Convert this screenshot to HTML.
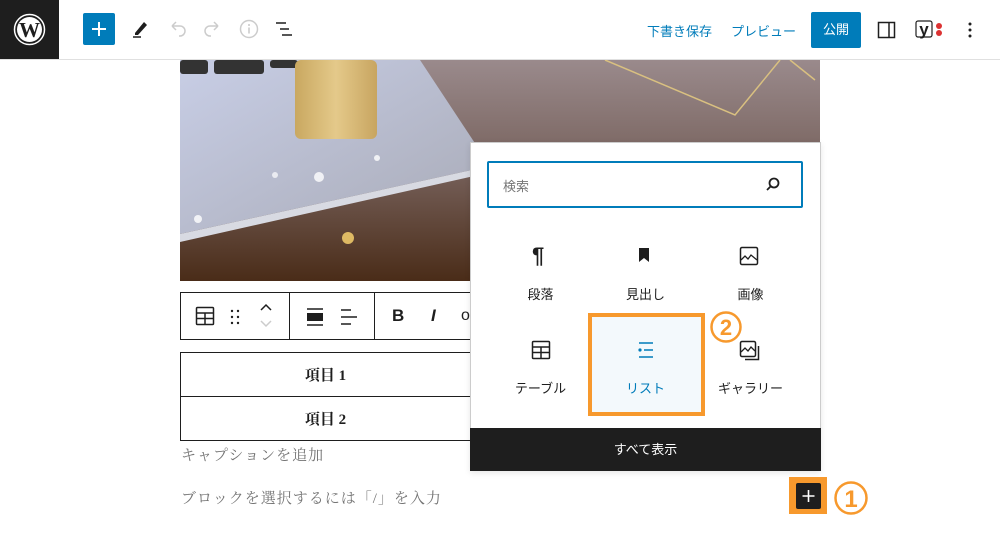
<!DOCTYPE html>
<html><head><meta charset="utf-8"><style>
*{box-sizing:border-box;margin:0;padding:0}
body{width:1000px;height:544px;overflow:hidden;background:#fff;font-family:"Liberation Sans","Noto Sans CJK JP",sans-serif;position:relative}
.abs{position:absolute}
.top{left:0;top:0;width:1000px;height:60px;border-bottom:1px solid #e0e0e0;background:#fff}
.serif{font-family:"Liberation Serif","Noto Serif CJK SC",serif}
.lbl{position:absolute;font-size:13px;color:#1e1e1e;text-align:center;width:105px}
</style></head><body>
<div class="abs top">
 <div class="abs" style="left:0;top:0;width:59px;height:59px;background:#1e1e1e">
  <svg class="abs" style="left:13px;top:13px" width="33" height="33" viewBox="0 0 33 33"><circle cx="16.5" cy="16.5" r="15" fill="none" stroke="#fff" stroke-width="1.5"/><circle cx="16.5" cy="16.5" r="12.5" fill="#fff"/><text x="16.5" y="24" text-anchor="middle" font-family="Liberation Serif" font-weight="bold" font-size="21" fill="#1e1e1e">W</text></svg>
 </div>
 <div class="abs" style="left:83px;top:13px;width:32px;height:32px;background:#007cba;border-radius:2px"><svg width="32" height="32"><path d="M16 9v14M9 16h14" stroke="#fff" stroke-width="2"/></svg></div>
 <svg class="abs" style="left:130px;top:18px" width="22" height="22"><path d="M5 15l9-11 3 3-9 10H5z" fill="#1e1e1e"/><path d="M3 19h8" stroke="#1e1e1e" stroke-width="1.5"/></svg>
 <svg class="abs" style="left:166px;top:18px" width="22" height="22"><path d="M6 8h8a5 5 0 0 1 0 10h-1M6 8l4-4M6 8l4 4" fill="none" stroke="#ccc" stroke-width="1.5"/></svg>
 <svg class="abs" style="left:202px;top:18px" width="22" height="22"><path d="M16 8H8a5 5 0 0 0 0 10h1M16 8l-4-4M16 8l-4 4" fill="none" stroke="#ccc" stroke-width="1.5"/></svg>
 <svg class="abs" style="left:238px;top:18px" width="22" height="22"><circle cx="11" cy="11" r="8.5" fill="none" stroke="#ccc" stroke-width="1.5"/><path d="M11 9.5v6M11 6v2" stroke="#ccc" stroke-width="1.6"/></svg>
 <svg class="abs" style="left:274px;top:20px" width="22" height="18"><path d="M2 3h10M6 9h9M8 15h10" stroke="#1e1e1e" stroke-width="1.6"/></svg>
 <div class="abs" style="left:647px;top:21px;font-size:13px;color:#007cba">下書き保存</div>
 <div class="abs" style="left:731px;top:21px;font-size:13px;color:#007cba">プレビュー</div>
 <div class="abs" style="left:811px;top:12px;width:50px;height:36px;background:#007cba;border-radius:2px;color:#fff;font-size:13px;text-align:center;line-height:36px">公開</div>
 <svg class="abs" style="left:877px;top:20px" width="20" height="20"><rect x="1.5" y="2.5" width="16" height="15" fill="none" stroke="#1e1e1e" stroke-width="1.5"/><path d="M12 3v14" stroke="#1e1e1e" stroke-width="1.5"/></svg>
 <svg class="abs" style="left:914px;top:18px" width="32" height="24"><rect x="2" y="3" width="16" height="16" rx="2" fill="none" stroke="#1e1e1e" stroke-width="1.2"/><text x="10" y="17" text-anchor="middle" font-size="17" font-weight="bold" fill="#1e1e1e" font-family="Liberation Sans">y</text><circle cx="25" cy="8" r="3" fill="#dc3232"/><circle cx="25" cy="15" r="3" fill="#dc3232"/></svg>
 <svg class="abs" style="left:965px;top:20px" width="10" height="20"><circle cx="5" cy="4" r="1.5" fill="#1e1e1e"/><circle cx="5" cy="10" r="1.5" fill="#1e1e1e"/><circle cx="5" cy="16" r="1.5" fill="#1e1e1e"/></svg>
</div>

<svg class="abs" style="left:180px;top:60px" width="640" height="221" viewBox="0 0 640 221">
 <defs>
  <linearGradient id="wood" x1="0" y1="0" x2="0" y2="1"><stop offset="0" stop-color="#9a8a8c"/><stop offset="0.45" stop-color="#7a6560"/><stop offset="1" stop-color="#4a2c18"/></linearGradient>
  <linearGradient id="lap" x1="0" y1="0" x2="1" y2="1"><stop offset="0" stop-color="#c8cee6"/><stop offset="1" stop-color="#a8aab6"/></linearGradient>
  <linearGradient id="gold" x1="0" y1="0" x2="1" y2="0"><stop offset="0" stop-color="#c9a860"/><stop offset="0.5" stop-color="#e4c98a"/><stop offset="1" stop-color="#c8a560"/></linearGradient>
 </defs>
 <rect width="640" height="221" fill="url(#wood)"/>
 <polygon points="0,0 240,0 310,106 0,174" fill="url(#lap)"/>
 <polygon points="0,174 310,106 312,112 0,182" fill="#d8dae2"/>
 <rect x="0" y="0" width="28" height="14" rx="3" fill="#333"/>
 <rect x="34" y="0" width="50" height="14" rx="3" fill="#333"/>
 <rect x="90" y="0" width="28" height="8" rx="3" fill="#333"/>
 <rect x="115" y="0" width="82" height="79" rx="6" fill="url(#gold)"/>
 <path d="M425 0L555 55 L600 0M610 0L635 20" stroke="#d9c080" stroke-width="1.5" fill="none"/>
 <circle cx="168" cy="178" r="6" fill="#ffd870" opacity=".8"/>
 <circle cx="139" cy="117" r="5" fill="#fff" opacity=".8"/>
 <circle cx="197" cy="98" r="3" fill="#fff" opacity=".8"/>
 <circle cx="18" cy="159" r="4" fill="#fff" opacity=".8"/>
 <circle cx="95" cy="115" r="3" fill="#fff" opacity=".7"/>
</svg>

<div class="abs" style="left:180px;top:292px;width:300px;height:48px;border:1px solid #1e1e1e;background:#fff">
 <svg class="abs" style="left:14px;top:13px" width="20" height="20"><rect x="1.5" y="1.5" width="17" height="17" rx="1" fill="none" stroke="#1e1e1e" stroke-width="1.5"/><path d="M1.5 7h17M1.5 12.5h17M10 7v11" stroke="#1e1e1e" stroke-width="1.5"/></svg>
 <svg class="abs" style="left:48px;top:15px" width="12" height="18"><g fill="#1e1e1e"><circle cx="3" cy="3" r="1.2"/><circle cx="9" cy="3" r="1.2"/><circle cx="3" cy="9" r="1.2"/><circle cx="9" cy="9" r="1.2"/><circle cx="3" cy="15" r="1.2"/><circle cx="9" cy="15" r="1.2"/></g></svg>
 <svg class="abs" style="left:77px;top:8px" width="16" height="30"><path d="M3 9l5-5 5 5" fill="none" stroke="#1e1e1e" stroke-width="1.5"/><path d="M3 20l5 5 5-5" fill="none" stroke="#ccc" stroke-width="1.5"/></svg>
 <div class="abs" style="left:108px;top:0;width:1px;height:46px;background:#1e1e1e"></div>
 <svg class="abs" style="left:124px;top:14px" width="20" height="20"><path d="M2 2h16M2 18h16" stroke="#1e1e1e" stroke-width="1.5"/><rect x="2" y="6" width="16" height="8" fill="#1e1e1e"/></svg>
 <svg class="abs" style="left:158px;top:14px" width="20" height="20"><path d="M2 3h10M2 10h16M2 17h10" stroke="#1e1e1e" stroke-width="1.5"/></svg>
 <div class="abs" style="left:193px;top:0;width:1px;height:46px;background:#1e1e1e"></div>
 <div class="abs" style="left:211px;top:13px;font-size:17px;font-weight:bold;color:#1e1e1e">B</div>
 <div class="abs" style="left:250px;top:13px;font-size:17px;font-style:italic;font-weight:bold;color:#1e1e1e">I</div>
 <div class="abs" style="left:280px;top:14px;font-size:16px;color:#1e1e1e">o</div>
</div>

<table class="abs serif" style="left:180px;top:352px;width:640px;border-collapse:collapse;font-size:15px;color:#1e1e1e">
 <tr><td style="border:1px solid #1e1e1e;height:44px;text-align:center;width:290px;font-weight:bold">項目 1</td><td style="border:1px solid #1e1e1e"></td></tr>
 <tr><td style="border:1px solid #1e1e1e;height:44px;text-align:center;font-weight:bold">項目 2</td><td style="border:1px solid #1e1e1e"></td></tr>
</table>
<div class="abs serif" style="left:181px;top:444px;font-size:15px;color:#757575;letter-spacing:1px">キャプションを追加</div>
<div class="abs serif" style="left:181px;top:487px;font-size:15px;color:#757575;letter-spacing:1px">ブロックを選択するには「/」を入力</div>

<div class="abs" style="left:470px;top:142px;width:351px;height:329px;background:#fff;border:1px solid #ccc;box-shadow:0 2px 6px rgba(0,0,0,.1)">
 <div class="abs" style="left:16px;top:18px;width:316px;height:47px;border:2px solid #007cba;border-radius:2px">
  <div class="abs" style="left:14px;top:13px;font-size:13px;color:#757575">検索</div>
  <svg class="abs" style="left:274px;top:12px" width="20" height="20"><circle cx="11" cy="8" r="4.5" fill="none" stroke="#1e1e1e" stroke-width="1.8"/><path d="M8 11l-4 4" stroke="#1e1e1e" stroke-width="1.8"/></svg>
 </div>
 <div class="abs" style="left:117px;top:170px;width:117px;height:103px;border:4px solid #f7992d;background:#f3f9fc"></div>
 <div class="abs" style="left:61px;top:100px;font-size:22px;font-weight:bold;color:#1e1e1e">¶</div>
 <svg class="abs" style="left:166px;top:104px" width="14" height="16"><path d="M2 1h10v14l-5-4-5 4z" fill="#1e1e1e"/></svg>
 <svg class="abs" style="left:268px;top:103px" width="20" height="20"><rect x="1.5" y="1.5" width="17" height="17" rx="1.5" fill="none" stroke="#1e1e1e" stroke-width="1.5"/><path d="M2 14l4-4 3 3 3-4 6 5" fill="none" stroke="#1e1e1e" stroke-width="1.3"/></svg>
 <div class="lbl" style="left:17px;top:141px">段落</div>
 <div class="lbl" style="left:122px;top:141px">見出し</div>
 <div class="lbl" style="left:227px;top:141px">画像</div>
 <svg class="abs" style="left:60px;top:197px" width="20" height="20"><rect x="1.5" y="1.5" width="17" height="17" rx="1" fill="none" stroke="#1e1e1e" stroke-width="1.5"/><path d="M1.5 7h17M1.5 12.5h17M10 7v11" stroke="#1e1e1e" stroke-width="1.5"/></svg>
 <svg class="abs" style="left:165px;top:198px" width="20" height="18"><path d="M3 2h14M8 9h9M3 16h14" stroke="#007cba" stroke-width="1.5"/><circle cx="4" cy="9" r="1.6" fill="#007cba"/></svg>
 <svg class="abs" style="left:268px;top:197px" width="22" height="22"><rect x="1.5" y="1.5" width="15" height="15" rx="1.5" fill="none" stroke="#1e1e1e" stroke-width="1.5"/><path d="M2 12l4-4 3 3 3-4 4 4" fill="none" stroke="#1e1e1e" stroke-width="1.3"/><path d="M19.5 6v13.5H6" fill="none" stroke="#1e1e1e" stroke-width="1.5"/></svg>
 <div class="lbl" style="left:17px;top:235px">テーブル</div>
 <div class="lbl" style="left:122px;top:235px;color:#007cba">リスト</div>
 <div class="lbl" style="left:227px;top:235px">ギャラリー</div>
 <div class="abs" style="left:-1px;top:285px;width:351px;height:43px;background:#1e1e1e;color:#fff;font-size:13px;text-align:center;line-height:43px">すべて表示</div>
</div>
<svg class="abs" style="left:708px;top:310px" width="36" height="36"><circle cx="18" cy="17" r="14.5" fill="none" stroke="#f7992d" stroke-width="2.5"/><text x="18" y="25" text-anchor="middle" font-family="Liberation Sans" font-weight="bold" font-size="22" fill="#f7992d">2</text></svg>

<div class="abs" style="left:789px;top:477px;width:38px;height:37px;background:#f7992d"></div>
<div class="abs" style="left:796px;top:483px;width:25px;height:26px;background:#1e1e1e;border-radius:2px"><svg width="25" height="26"><path d="M12.5 7v12M6.5 13h12" stroke="#fff" stroke-width="1.6"/></svg></div>
<svg class="abs" style="left:833px;top:480px" width="38" height="38"><circle cx="18" cy="18" r="15.5" fill="none" stroke="#f7992d" stroke-width="2.5"/><text x="18" y="27" text-anchor="middle" font-family="Liberation Sans" font-weight="bold" font-size="24" fill="#f7992d">1</text></svg>
</body></html>
